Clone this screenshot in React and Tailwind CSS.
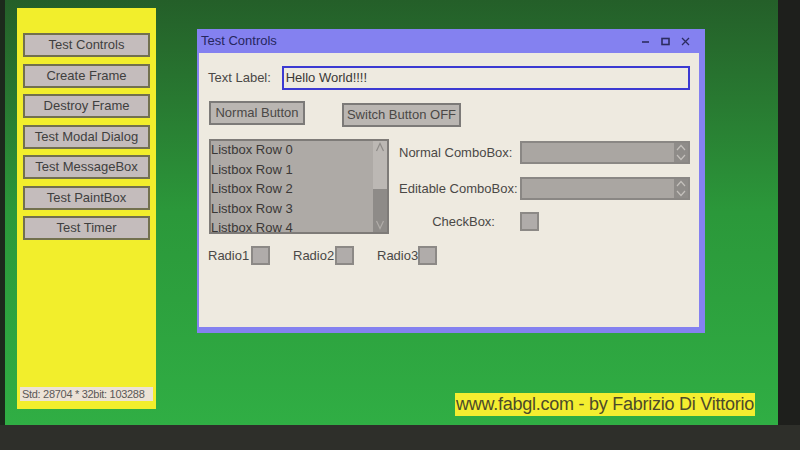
import React from 'react';

const menu = [
  'Test Controls',
  'Create Frame',
  'Destroy Frame',
  'Test Modal Dialog',
  'Test MessageBox',
  'Test PaintBox',
  'Test Timer',
];

const rows = ['Listbox Row 0', 'Listbox Row 1', 'Listbox Row 2', 'Listbox Row 3', 'Listbox Row 4'];

function UpDown() {
  return (
    <svg width="12" height="19" viewBox="0 0 12 19">
      <path d="M2 7 L6 2.5 L10 7" fill="none" stroke="#c4c0bc" strokeWidth="1.2" />
      <path d="M2 12 L6 16.5 L10 12" fill="none" stroke="#c4c0bc" strokeWidth="1.2" />
    </svg>
  );
}

function Combo() {
  return (
    <div className="w-[170px] h-[23px] bg-[#aaa6a2] border-2 border-[#8a8784] flex justify-end items-center">
      <div className="h-full w-[14px] bg-[#8f8c89] flex items-center justify-center">
        <UpDown />
      </div>
    </div>
  );
}

function Box() {
  return <div className="w-[19px] h-[19px] bg-[#b0acaa] border-2 border-[#8c8986]" />;
}

export default function App() {
  return (
    <div
      className="w-[800px] h-[450px] bg-[#2b2d29] flex flex-col overflow-hidden text-[#4a4846]"
      style={{ fontFamily: '"Liberation Sans", Arial, sans-serif' }}
    >
      <div className="h-[425px] flex">
        <div className="w-[5px] bg-[#1c2a1c]" />
        <div className="w-[773px] h-full flex pl-[12px] pt-[8px] bg-gradient-to-b from-[#245f29] via-[#2b983a] to-[#30ae44]">
          {/* Yellow menu panel */}
          <div className="w-[139px] h-[401px] bg-[#f2ee2c] flex flex-col pt-[25px] px-[6px]">
            <div className="flex flex-col gap-[6.5px]">
              {menu.map((m) => (
                <div
                  key={m}
                  className="h-[24px] bg-[#c4bcbc] border-2 border-[#72704e] flex items-center justify-center text-[13px] text-[#3f3f3f]"
                >
                  {m}
                </div>
              ))}
            </div>
            <div className="mt-auto mb-[8px] -mx-[3px] h-[14px] bg-[#ece2d6] flex items-center px-[2px] text-[11px] tracking-[-0.3px] text-[#5a5856] whitespace-nowrap">
              Std: 28704 * 32bit: 103288
            </div>
          </div>

          {/* Right area */}
          <div className="flex-1 flex flex-col pt-[21px] pl-[41px] pr-[23px]">
            {/* Window */}
            <div className="w-[508px] h-[304px] bg-[#8481f0] flex flex-col pl-[2px] pr-[6px] pb-[6px]">
              <div className="h-[24px] shrink-0 flex items-center pl-[2px] pr-[9px] text-[13px] text-[#26265e]">
                <span>Test Controls</span>
                <div className="ml-auto flex items-center gap-[11px]">
                  <svg width="9" height="9" viewBox="0 0 9 9">
                    <path d="M1 5 H8" stroke="#2c2c60" strokeWidth="1.6" />
                  </svg>
                  <svg width="9" height="9" viewBox="0 0 9 9">
                    <rect x="1" y="1.5" width="7" height="6" fill="none" stroke="#2c2c60" strokeWidth="1.6" />
                  </svg>
                  <svg width="9" height="9" viewBox="0 0 9 9">
                    <path d="M1 1 L8 8 M8 1 L1 8" stroke="#2c2c60" strokeWidth="1.3" />
                  </svg>
                </div>
              </div>
              <div className="flex-1 bg-[#eeeae0] flex flex-col px-[9px] pt-[13px]">
                {/* Text label row */}
                <div className="flex items-center h-[24px]">
                  <span className="w-[74px] text-[13px]">Text Label:</span>
                  <div className="w-[410px] h-[24px] border-2 border-[#3c3ad2] flex items-center pl-[2px] text-[13px] text-[#3a3836]">
                    Hello World!!!!
                  </div>
                </div>

                {/* Buttons row */}
                <div className="flex items-start mt-[11px] pl-[1px]">
                  <div className="w-[96px] h-[24px] bg-[#bab6b2] border-2 border-[#7c7a78] flex items-center justify-center text-[13px]">
                    Normal Button
                  </div>
                  <div className="ml-[37px] mt-[2px] w-[119px] h-[24px] bg-[#bab6b2] border-2 border-[#7c7a78] flex items-center justify-center text-[13px]">
                    Switch Button OFF
                  </div>
                </div>

                {/* Listbox + combos */}
                <div className="flex mt-[12px] pl-[1px]">
                  <div className="w-[180px] h-[95px] bg-[#aeaaa6] border-2 border-[#7e7b78] flex">
                    <div className="flex-1 flex flex-col text-[13px] text-[#3a3836] leading-[19.5px] -mt-[1px]">
                      {rows.map((r) => (
                        <span key={r}>{r}</span>
                      ))}
                    </div>
                    <div className="w-[14px] bg-[#8e8b88] flex flex-col">
                      <div className="h-[48px] bg-[#bcb8b4] flex justify-center pt-[1px]">
                        <svg width="10" height="10" viewBox="0 0 10 10">
                          <path d="M1.5 9 L5 1.5 L8.5 9" fill="none" stroke="#8e8b88" strokeWidth="1.2" />
                        </svg>
                      </div>
                      <div className="mt-auto flex justify-center pb-[2px]">
                        <svg width="10" height="10" viewBox="0 0 10 10">
                          <path d="M1.5 1 L5 8.5 L8.5 1" fill="none" stroke="#b0aca8" strokeWidth="1.2" />
                        </svg>
                      </div>
                    </div>
                  </div>
                  <div className="ml-[10px] pt-[2px] flex flex-col">
                    <div className="flex items-center h-[23px]">
                      <span className="w-[121px] text-[13px]">Normal ComboBox:</span>
                      <Combo />
                    </div>
                    <div className="flex items-center h-[23px] mt-[13px]">
                      <span className="w-[121px] text-[13px]">Editable ComboBox:</span>
                      <Combo />
                    </div>
                    <div className="flex items-center mt-[12px]">
                      <span className="w-[121px] text-[13px] text-right pr-[25px]">CheckBox:</span>
                      <Box />
                    </div>
                  </div>
                </div>

                {/* Radios */}
                <div className="flex items-center mt-[12px] text-[13px]">
                  <span className="w-[43px]">Radio1</span>
                  <Box />
                  <span className="ml-[23px] w-[42px]">Radio2</span>
                  <Box />
                  <span className="ml-[23px] w-[41px]">Radio3</span>
                  <Box />
                </div>
              </div>
            </div>

            {/* Footer */}
            <div className="mt-auto mb-[9px] self-end h-[23px] bg-[#f4ee30] flex items-center px-[1px] text-[18px] text-[#4c4a2a] tracking-[-0.25px] whitespace-nowrap">
              www.fabgl.com - by Fabrizio Di Vittorio
            </div>
          </div>
        </div>
        <div className="flex-1 bg-[#1e1f1c]" />
      </div>
      <div className="flex-1 bg-[#2e2f2a]" />
    </div>
  );
}
